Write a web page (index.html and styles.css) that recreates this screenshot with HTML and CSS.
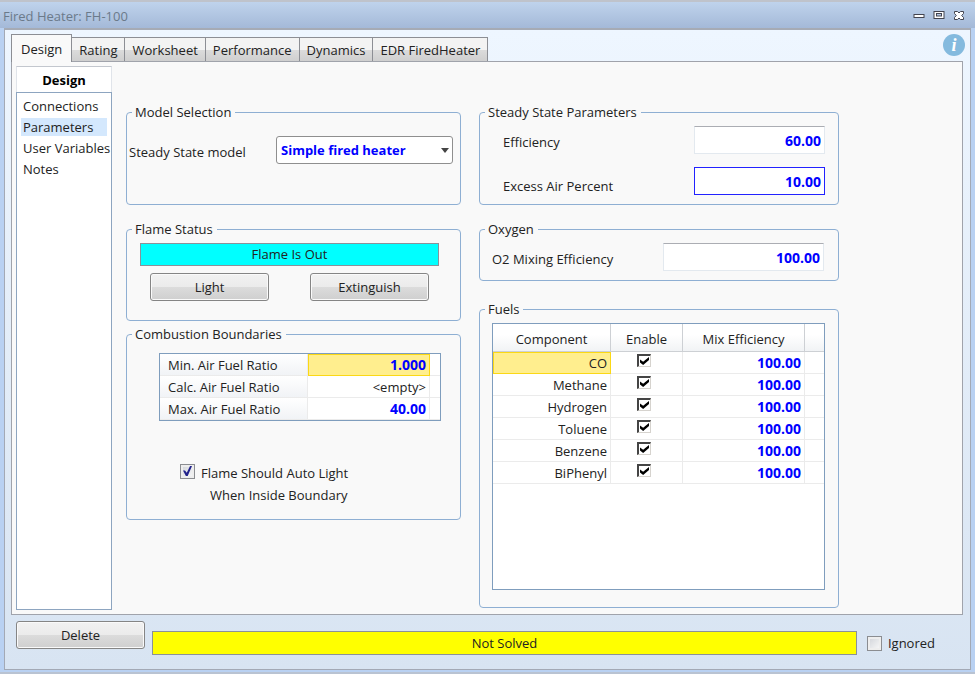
FILE: index.html
```html
<!DOCTYPE html>
<html lang="en">
<head>
<meta charset="utf-8">
<title>Fired Heater: FH-100</title>
<link rel="stylesheet" href="styles.css">
</head>
<body>
<div class="window">
  <header class="titlebar">
    <h1 class="title">Fired Heater: FH-100</h1>
    <div class="window-controls">
      <button type="button" aria-label="Minimize"><svg width="12" height="12" viewBox="0 0 12 12"><rect x="1" y="6.500" width="10" height="3" fill="#fff" stroke="#43444f"/></svg></button>
      <button type="button" aria-label="Maximize"><svg width="12" height="12" viewBox="0 0 12 12"><rect x="1" y="3.500" width="10" height="7" fill="#fff" stroke="#43444f"/><rect x="3.500" y="5.500" width="5" height="2.500" fill="#b4c8e4" stroke="#43444f"/></svg></button>
      <button type="button" aria-label="Close"><svg width="12" height="12" viewBox="0 0 12 12"><path d="M1.500 3.500h3L6 5l1.500-1.500h3v2L8.700 7.500l1.800 2v2h-3L6 10l-1.500 1.500h-3v-2l1.800-2-1.800-2z" fill="#fff" stroke="#43444f"/></svg></button>
    </div>
  </header>
  <main class="client">
    <div class="tab-row">
      <nav class="tabs">
        <button type="button" class="tab tab-active">Design</button>
        <button type="button" class="tab">Rating</button>
        <button type="button" class="tab">Worksheet</button>
        <button type="button" class="tab">Performance</button>
        <button type="button" class="tab">Dynamics</button>
        <button type="button" class="tab">EDR FiredHeater</button>
      </nav>
      <button type="button" class="info" aria-label="Information">i</button>
    </div>
    <div class="page">
      <aside class="sidebar">
        <h2 class="sidebar-title">Design</h2>
        <ul class="sidebar-list">
          <li><a href="#connections">Connections</a></li>
          <li><a href="#parameters" class="current">Parameters</a></li>
          <li><a href="#variables">User Variables</a></li>
          <li><a href="#notes">Notes</a></li>
        </ul>
      </aside>
      <div class="columns">
        <div class="column">
          <fieldset class="group">
            <legend>Model Selection</legend>
            <div class="model-row">
              <label for="model">Steady State model</label>
              <span class="select-box">
                <select id="model"><option>Simple fired heater</option></select>
              </span>
            </div>
          </fieldset>
          <fieldset class="group flame">
            <legend>Flame Status</legend>
            <div class="flame-body">
              <div class="status status-out">Flame Is Out</div>
              <div class="flame-actions">
                <button type="button" class="button">Light</button>
                <button type="button" class="button">Extinguish</button>
              </div>
            </div>
          </fieldset>
          <fieldset class="group combustion">
            <legend>Combustion Boundaries</legend>
            <table class="ratios">
              <colgroup><col class="ratio-name"><col><col class="ratio-end"></colgroup>
              <tbody>
                <tr><th scope="row">Min. Air Fuel Ratio</th><td class="value selected">1.000</td><td></td></tr>
                <tr><th scope="row">Calc. Air Fuel Ratio</th><td class="empty">&lt;empty&gt;</td><td></td></tr>
                <tr><th scope="row">Max. Air Fuel Ratio</th><td class="value">40.00</td><td></td></tr>
              </tbody>
            </table>
            <div class="auto-light">
              <input type="checkbox" class="check" id="auto" checked>
              <label for="auto">Flame Should Auto Light<span class="second-line">When Inside Boundary</span></label>
            </div>
          </fieldset>
        </div>
        <div class="column">
          <fieldset class="group">
            <legend>Steady State Parameters</legend>
            <div class="steady-body">
              <div class="field"><label for="efficiency">Efficiency</label><input type="text" class="text" id="efficiency" value="60.00"></div>
              <div class="field field-low"><label for="excess">Excess Air Percent</label><input type="text" class="text text-focus" id="excess" value="10.00"></div>
            </div>
          </fieldset>
          <fieldset class="group">
            <legend>Oxygen</legend>
            <div class="field oxygen-body"><label for="mixing">O2 Mixing Efficiency</label><input type="text" class="text text-wide" id="mixing" value="100.00"></div>
          </fieldset>
          <fieldset class="group fuels">
            <legend>Fuels</legend>
            <div class="fuels-box">
              <table class="fuel-table">
                <colgroup><col class="fuel-name"><col class="fuel-enable"><col class="fuel-mix"><col></colgroup>
                <thead><tr><th scope="col">Component</th><th scope="col">Enable</th><th scope="col">Mix Efficiency</th><td></td></tr></thead>
                <tbody>
                  <tr><td class="selected">CO</td><td class="enable"><input type="checkbox" class="cell-check" aria-label="Enable CO" checked></td><td class="value">100.00</td><td></td></tr>
                  <tr><td>Methane</td><td class="enable"><input type="checkbox" class="cell-check" aria-label="Enable Methane" checked></td><td class="value">100.00</td><td></td></tr>
                  <tr><td>Hydrogen</td><td class="enable"><input type="checkbox" class="cell-check" aria-label="Enable Hydrogen" checked></td><td class="value">100.00</td><td></td></tr>
                  <tr><td>Toluene</td><td class="enable"><input type="checkbox" class="cell-check" aria-label="Enable Toluene" checked></td><td class="value">100.00</td><td></td></tr>
                  <tr><td>Benzene</td><td class="enable"><input type="checkbox" class="cell-check" aria-label="Enable Benzene" checked></td><td class="value">100.00</td><td></td></tr>
                  <tr><td>BiPhenyl</td><td class="enable"><input type="checkbox" class="cell-check" aria-label="Enable BiPhenyl" checked></td><td class="value">100.00</td><td></td></tr>
                </tbody>
              </table>
            </div>
          </fieldset>
        </div>
      </div>
    </div>
    <footer class="footer">
      <button type="button" class="button delete">Delete</button>
      <div class="status status-unsolved">Not Solved</div>
      <div class="ignored"><input type="checkbox" class="check" id="ignored"><label for="ignored">Ignored</label></div>
    </footer>
  </main>
</div>
</body>
</html>
```
FILE: styles.css
```css
* {
  box-sizing: border-box;
}

body {
  margin: 0;
  font: 13px/18px "Open Sans", "Noto Sans", sans-serif;
  color: #222;
}

button,
input,
select {
  margin: 0;
  font: inherit;
  color: inherit;
}

.window {
  display: flex;
  flex-direction: column;
  min-height: 100vh;
  background: #b9d1f2;
  border-top: 2px solid #bfc3cb;
  border-bottom: 2px solid #b9c3d2;
}

.titlebar {
  display: flex;
  justify-content: space-between;
  height: 26px;
  padding: 0 10px 0 3px;
  background: linear-gradient(#bfd3ec, #a4b9d8);
}

.title {
  margin: 0;
  font-size: 13px;
  font-weight: 400;
  line-height: 29px;
  color: #6b7a8a;
}

.window-controls {
  display: flex;
  gap: 8px;
  padding-top: 6px;
}

.window-controls button {
  width: 12px;
  height: 12px;
  padding: 0;
  border: 0;
  background: none;
}

.window-controls svg {
  display: block;
}

.client {
  flex: 1;
  display: flex;
  flex-direction: column;
  margin: 0 4px 2px;
  padding: 4px 5px 0 6px;
  border: 1px solid #a3a9b5;
  border-top: 2px solid #a6abb5;
  background: linear-gradient(#eef6ff, #d8e4f2);
}

/* Tabs */
.tab-row {
  display: flex;
  justify-content: space-between;
  align-items: flex-start;
  height: 27px;
}

.tabs {
  display: flex;
  align-items: flex-end;
}

.tab {
  height: 24px;
  margin-left: -1px;
  padding: 0 7px;
  border: 1px solid #8c8e94;
  border-bottom: 0;
  background: linear-gradient(#f3f3f3 50%, #dcdcdc 50%, #cfcfcf);
}

.tab-active {
  position: relative;
  height: 28px;
  margin: 0 0 -1px;
  padding: 0 9px;
  background: #f9f9f9;
}

.info {
  width: 22px;
  height: 22px;
  padding: 0;
  border: 0;
  border-radius: 50%;
  background: #84bade;
  color: #fff;
  font: italic bold 18px/20px "Liberation Serif", serif;
}

/* Page */
.page {
  flex: 1;
  display: flex;
  gap: 14px;
  margin-right: 2px;
  padding: 4px;
  border: 1px solid #a0a3ab;
  background: #f9f9f9;
}

.sidebar {
  display: flex;
  flex-direction: column;
  width: 96px;
}

.sidebar-title {
  margin: 0;
  height: 26px;
  border: 1px solid #e0e4ea;
  border-top-color: #c3c7ce;
  border-bottom: 0;
  background: #fff;
  font-size: 13px;
  font-weight: 700;
  line-height: 26px;
  text-align: center;
  color: #000;
}

.sidebar-list {
  flex: 1;
  margin: 0;
  padding: 4px;
  border: 1px solid #8da5c0;
  background: #fff;
  list-style: none;
}

.sidebar-list a {
  display: block;
  height: 18px;
  margin-bottom: 3px;
  padding-left: 2px;
  color: inherit;
  text-decoration: none;
  white-space: nowrap;
}

.sidebar-list .current {
  background: #d4e8fd;
}

.columns {
  flex: 1;
  display: grid;
  grid-template-columns: minmax(0, 335px) minmax(0, 360px);
  gap: 18px;
  padding: 37px 0 2px;
}

.column {
  display: flex;
  flex-direction: column;
}

.group {
  min-width: 0;
  margin: 0;
  padding: 0;
  border: 1px solid #8eafd3;
  border-radius: 4px;
}

.group legend {
  margin-left: 5px;
  padding: 0 4px 0 3px;
}

.model-row {
  display: flex;
  align-items: center;
  justify-content: space-between;
  padding: 15px 7px 40px 2px;
}

.model-row label {
  padding-top: 3px;
}

.select-box {
  position: relative;
  width: 177px;
}

.select-box::after {
  content: "";
  position: absolute;
  top: 12px;
  right: 4px;
  border: 4px solid transparent;
  border-top: 5px solid #444;
  border-bottom: 0;
  pointer-events: none;
}

.select-box select {
  display: block;
  appearance: none;
  width: 100%;
  height: 28px;
  padding: 0 4px;
  border: 1px solid #8f8f8f;
  border-radius: 3px;
  background: #fff;
  color: #00f;
  font-weight: 700;
}

.flame {
  margin-top: 15px;
}

.flame-body {
  padding: 5px 21px 19px 13px;
}

.status {
  border: 1px solid #8a9199;
  text-align: center;
}

.status-out {
  line-height: 21px;
  background: #0ff;
}

.flame-actions {
  display: flex;
  justify-content: space-between;
  padding: 7px 10px 0;
}

.button {
  width: 119px;
  height: 28px;
  padding: 0;
  border: 1px solid #858585;
  border-radius: 3px;
  background: linear-gradient(#f2f2f2, #ebebeb 50%, #dcdcdc 50%, #cfcfcf);
  box-shadow: inset 0 0 0 1px #fafafa;
}

.combustion {
  margin-top: 4px;
}

table {
  border-collapse: separate;
  border-spacing: 0;
  table-layout: fixed;
}

th {
  font-weight: 400;
}

th,
td {
  height: 22px;
  padding: 0 4px;
  border-right: 1px solid #ebebeb;
  border-bottom: 1px solid #ebebeb;
  text-align: right;
}

tr > :last-child {
  border-right: 0;
}

.value {
  color: #00f;
  font-size: 14px;
  font-weight: 700;
}

td.selected {
  border: 1px solid #fbd815;
  background: #ffee8e;
}

.ratios {
  width: 282px;
  margin: 10px 0 0 32px;
  border: 1px solid #7f9dbd;
  background: #fff;
}

.ratio-name {
  width: 148px;
}

.ratio-end {
  width: 10px;
}

.ratios td {
  padding-right: 3px;
}

.ratios td:last-child {
  padding: 0;
}

.ratios th {
  padding-left: 8px;
  background: linear-gradient(#fff, #f1f3f6);
  text-align: left;
}

.auto-light {
  display: flex;
  gap: 6px;
  padding: 41px 0 13px 53px;
  line-height: 22px;
}

.second-line {
  display: block;
  padding-left: 9px;
}

.check {
  appearance: none;
  flex: none;
  width: 15px;
  height: 15px;
  border: 1px solid #8b8d91;
  background: linear-gradient(135deg, #cfd2d8, #fbfbfb);
  box-shadow: inset 0 0 0 2px #eeeeee;
}

.auto-light .check {
  margin-top: 2px;
}

.check:checked::before {
  content: "";
  display: block;
  width: 9px;
  height: 10px;
  margin: 1px 2px;
  background: #22228c;
  clip-path: polygon(0 45%, 22% 45%, 42% 68%, 78% 0, 100% 0, 52% 100%, 32% 100%);
}

.field {
  display: flex;
  align-items: center;
  justify-content: space-between;
}

.steady-body {
  padding: 5px 13px 9px 23px;
}

.field label {
  padding-top: 3px;
}

.field-low {
  margin-top: 13px;
}

.field-low label {
  padding-top: 10px;
}

.text {
  width: 131px;
  height: 28px;
  padding: 0 3px;
  border: 1px solid #e3e9ef;
  border-top-color: #abadb3;
  background: #fff;
  color: #00f;
  font-size: 14px;
  font-weight: 700;
  text-align: right;
}

.text-focus {
  border-color: #22f;
}

.text-wide {
  width: 161px;
}

.oxygen-body {
  padding: 5px 14px 9px 12px;
}

.group:has(.oxygen-body) {
  margin-top: 15px;
}

.fuels {
  flex: 1;
  display: flex;
  flex-direction: column;
  margin-top: 19px;
}

.fuels-box {
  flex: 1;
  margin: 5px 13px 17px 12px;
  border: 1px solid #7f9dbd;
  background: #fff;
}

.fuel-table {
  width: 100%;
}

.fuel-name {
  width: 118px;
}

.fuel-enable {
  width: 72px;
}

.fuel-mix {
  width: 122px;
}

.fuel-table thead > tr > * {
  height: 28px;
  padding-top: 2px;
  border-color: #cdd0d4;
  background: linear-gradient(#fff 40%, #f1f3f5);
  text-align: center;
}

.fuel-table .enable {
  padding: 2px 0 0 26px;
  text-align: left;
  vertical-align: top;
}

.fuel-table td {
  padding-right: 3px;
}

.cell-check {
  appearance: none;
  display: block;
  width: 14px;
  height: 13px;
  border: 1px solid #d6d3ce;
  border-top: 2px solid #444;
  border-left: 2px solid #444;
  background: #fff;
}

.cell-check:checked::before {
  content: "";
  display: block;
  width: 9px;
  height: 8px;
  margin: 1px;
  background: #000;
  clip-path: polygon(0 30%, 35% 60%, 100% 0, 100% 38%, 35% 100%, 0 68%);
}

/* Footer */
.footer {
  display: flex;
  align-items: flex-start;
  gap: 7px;
  height: 54px;
  padding: 6px 30px 0 5px;
}

.delete {
  width: 129px;
}

.status-unsolved {
  flex: 1;
  margin-top: 10px;
  line-height: 22px;
  background: #ff0;
}

.ignored {
  display: flex;
  align-items: center;
  gap: 6px;
  height: 24px;
  margin: 10px 0 0 3px;
}
```
